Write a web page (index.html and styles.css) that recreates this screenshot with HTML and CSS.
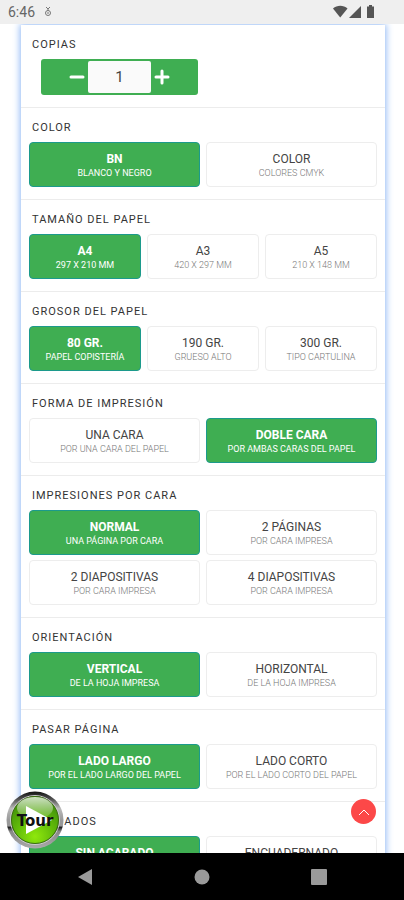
FILE: index.html
```html
<!DOCTYPE html>
<html lang="es">
<head>
<meta charset="utf-8">
<meta name="viewport" content="width=device-width, initial-scale=1">
<title>Opciones de impresión</title>
<link rel="stylesheet" href="styles.css">
</head>
<body>

<header class="statusbar">
<span class="clock">6:46</span>
<svg class="notif" width="8" height="12" viewBox="0 0 8 12" fill="none" stroke="#777"><path d="M2 1l2 2 2-2M4 3v2"/><circle cx="4" cy="7" r="2.5"/><path d="M4 6v2"/></svg>
<svg class="signals" width="44" height="14" viewBox="0 0 44 14" fill="#555">
<path d="M0 3.5C4-.2 10.500-.2 14.500 3.500L7.200 12.500z"/>
<path d="M28 1v12H16z"/>
<path d="M36 0h3v1.500h2V13h-7V1.500h2z"/>
</svg>
</header>

<main class="screen">
<form class="card">

<section class="group">
<h2><label for="copias">Copias</label></h2>
<div class="stepper">
<button type="button" class="minus" aria-label="Menos"><svg width="16" height="16" viewBox="0 0 16 16"><path d="M2 8h12"/></svg></button>
<input id="copias" type="text" inputmode="numeric" value="1">
<button type="button" class="plus" aria-label="Más"><svg width="16" height="16" viewBox="0 0 16 16"><path d="M2 8h12M8 2v12"/></svg></button>
</div>
</section>

<section class="group" role="radiogroup" aria-labelledby="t-color">
<h2 id="t-color">Color</h2>
<div class="options">
<label><input type="radio" name="color" checked><span class="tile"><b>BN</b><small>Blanco y negro</small></span></label>
<label><input type="radio" name="color"><span class="tile"><b>Color</b><small>Colores CMYK</small></span></label>
</div>
</section>

<section class="group" role="radiogroup" aria-labelledby="t-tamano">
<h2 id="t-tamano">Tamaño del papel</h2>
<div class="options three">
<label><input type="radio" name="tamano" checked><span class="tile"><b>A4</b><small>297 x 210 mm</small></span></label>
<label><input type="radio" name="tamano"><span class="tile"><b>A3</b><small>420 x 297 mm</small></span></label>
<label><input type="radio" name="tamano"><span class="tile"><b>A5</b><small>210 x 148 mm</small></span></label>
</div>
</section>

<section class="group" role="radiogroup" aria-labelledby="t-grosor">
<h2 id="t-grosor">Grosor del papel</h2>
<div class="options three">
<label><input type="radio" name="grosor" checked><span class="tile"><b>80 gr.</b><small>Papel copistería</small></span></label>
<label><input type="radio" name="grosor"><span class="tile"><b>190 gr.</b><small>Grueso alto</small></span></label>
<label><input type="radio" name="grosor"><span class="tile"><b>300 gr.</b><small>Tipo cartulina</small></span></label>
</div>
</section>

<section class="group" role="radiogroup" aria-labelledby="t-forma">
<h2 id="t-forma">Forma de impresión</h2>
<div class="options">
<label><input type="radio" name="forma"><span class="tile"><b>Una cara</b><small>Por una cara del papel</small></span></label>
<label><input type="radio" name="forma" checked><span class="tile"><b>Doble cara</b><small>Por ambas caras del papel</small></span></label>
</div>
</section>

<section class="group" role="radiogroup" aria-labelledby="t-porcara">
<h2 id="t-porcara">Impresiones por cara</h2>
<div class="options">
<label><input type="radio" name="porcara" checked><span class="tile"><b>Normal</b><small>Una página por cara</small></span></label>
<label><input type="radio" name="porcara"><span class="tile"><b>2 páginas</b><small>Por cara impresa</small></span></label>
<label><input type="radio" name="porcara"><span class="tile"><b>2 diapositivas</b><small>Por cara impresa</small></span></label>
<label><input type="radio" name="porcara"><span class="tile"><b>4 diapositivas</b><small>Por cara impresa</small></span></label>
</div>
</section>

<section class="group" role="radiogroup" aria-labelledby="t-orientacion">
<h2 id="t-orientacion">Orientación</h2>
<div class="options">
<label><input type="radio" name="orientacion" checked><span class="tile"><b>Vertical</b><small>De la hoja impresa</small></span></label>
<label><input type="radio" name="orientacion"><span class="tile"><b>Horizontal</b><small>De la hoja impresa</small></span></label>
</div>
</section>

<section class="group" role="radiogroup" aria-labelledby="t-pasar">
<h2 id="t-pasar">Pasar página</h2>
<div class="options">
<label><input type="radio" name="pasar" checked><span class="tile"><b>Lado largo</b><small>Por el lado largo del papel</small></span></label>
<label><input type="radio" name="pasar"><span class="tile"><b>Lado corto</b><small>Por el lado corto del papel</small></span></label>
</div>
</section>

<section class="group" role="radiogroup" aria-labelledby="t-acabados">
<h2 id="t-acabados">Acabados</h2>
<div class="options">
<label><input type="radio" name="acabados" checked><span class="tile"><b>Sin acabado</b></span></label>
<label><input type="radio" name="acabados"><span class="tile"><b>Encuadernado</b></span></label>
</div>
</section>

</form>

<button type="button" class="tour">
<svg width="58" height="58" viewBox="0 0 58 58">
<defs>
<linearGradient id="rim" x1="0" y1="0" x2="0" y2="1">
<stop offset="0" stop-color="#111"/><stop offset=".14" stop-color="#555"/><stop offset=".3" stop-color="#bbb"/>
<stop offset=".5" stop-color="#999"/><stop offset=".6" stop-color="#999"/><stop offset=".63" stop-color="#222"/><stop offset=".7" stop-color="#888"/><stop offset="1" stop-color="#aaa"/>
</linearGradient>
<radialGradient id="green" cx=".5" cy=".85" r=".8">
<stop offset="0" stop-color="#8fe80c"/><stop offset=".5" stop-color="#62bb0a"/><stop offset="1" stop-color="#3f8f0a"/>
</radialGradient>
<linearGradient id="gloss" x1="0" y1="0" x2="0" y2="1">
<stop offset="0" stop-color="#fff" stop-opacity=".75"/><stop offset="1" stop-color="#fff" stop-opacity=".1"/>
</linearGradient>
</defs>
<circle cx="29" cy="29" r="28.500" fill="url(#rim)"/>
<circle cx="29" cy="29" r="24.500" fill="none" stroke="#ccc"/>
<circle cx="29" cy="29" r="23.500" fill="url(#green)" stroke="#39700c"/>
<ellipse cx="29" cy="17" rx="18" ry="11" fill="url(#gloss)"/>
<path d="M20 15L46 29 20 43z" fill="#fff"/>
<text x="29" y="35" text-anchor="middle">Tour</text>
</svg>
</button>
<a class="totop" href="#" aria-label="Subir"><svg width="12" height="8" viewBox="0 0 12 8"><path d="M1 7l5-5 5 5"/></svg></a>
</main>

<nav class="navbar">
<button type="button" aria-label="Atrás"><svg width="16" height="18" viewBox="0 0 16 18"><path d="M15 1v16L1 9z"/></svg></button>
<button type="button" aria-label="Inicio"><svg width="16" height="16" viewBox="0 0 16 16"><circle cx="8" cy="8" r="7.500"/></svg></button>
<button type="button" aria-label="Recientes"><svg width="16" height="16" viewBox="0 0 16 16"><rect width="16" height="16" rx="1"/></svg></button>
</nav>

</body>
</html>
```
FILE: styles.css
```css
* { box-sizing: border-box; }
body { margin: 0; height: 100vh; display: flex; flex-direction: column; background: #fff;
       font-family: Roboto, "Liberation Sans", sans-serif; color: #444; }
button { border: 0; padding: 0; background: none; font: inherit; }
svg { display: block; }

.statusbar { flex: none; height: 24px; padding: 0 27px 0 8px; display: flex; align-items: center; gap: 9px;
             background: #efefef; }
.clock { font-size: 14px; line-height: 24px; color: #666; }
.signals { margin-left: auto; }

.screen { position: relative; flex: 1; min-height: 0; overflow: hidden; }
.card { margin: 1px 19px 0 21px; background: #fff; box-shadow: 0 0 7px 1px #8fb8f5; }

.group { padding: 11px 8px 12px; border-bottom: 1px solid #ececec; }
.group h2 { margin: 0 0 5px; padding-left: 3px; font-size: 11px; line-height: 18px; font-weight: 400;
            letter-spacing: 1px; text-transform: uppercase; color: #333; }

.stepper { width: 157px; height: 36px; margin-left: 12px; padding: 2px 0; display: flex;
           background: #3fae52; border-radius: 3px; }
.stepper button { flex: 1; display: flex; align-items: center; padding: 0 3px; }
.stepper .minus { justify-content: flex-end; }
.stepper path { stroke: #fff; stroke-width: 3; stroke-linecap: round; }
.stepper input { width: 63px; padding: 0; border: 0; border-radius: 2px; background: #fafafa; text-align: center;
                 font: 15px Roboto, "Liberation Sans", sans-serif; color: #444; }

.options { display: grid; grid-template-columns: 1fr 1fr; gap: 5px 6px; }
.three { grid-template-columns: 1fr 1fr 1fr; }
.options label { position: relative; }
.options input { position: absolute; inset: 0; margin: 0; opacity: 0; }
.tile { height: 45px; padding-top: 9px; display: flex; flex-direction: column; align-items: center;
        border: 1px solid #ededed; border-radius: 4px; text-transform: uppercase; white-space: nowrap; }
.tile b { font-size: 12px; line-height: 15px; font-weight: 400; }
.tile small { font-size: 9px; line-height: 12px; font-weight: 300; color: #777; }
.options input:checked + .tile { background: #3fae52; border-color: #1c9a8c; color: #fff; }
.options input:checked + .tile b { font-weight: 700; }
.options input:checked + .tile small { font-weight: 400; color: #fff; }

/* floating buttons */
.tour { position: absolute; left: 6px; bottom: 4px; }
.tour text { font: bold 15px "DejaVu Sans", sans-serif; fill: #111; }
.totop { position: absolute; right: 28px; bottom: 29px; width: 25px; height: 25px; border-radius: 50%;
         display: flex; align-items: center; justify-content: center; background: #fc4848; }
.totop path { fill: none; stroke: #fff; }

.navbar { flex: none; height: 47px; padding: 0 27px; display: flex; justify-content: space-around; align-items: center;
          background: #000; }
.navbar button { width: 48px; display: flex; justify-content: center; }
.navbar svg { fill: #9a9a9a; }
```
